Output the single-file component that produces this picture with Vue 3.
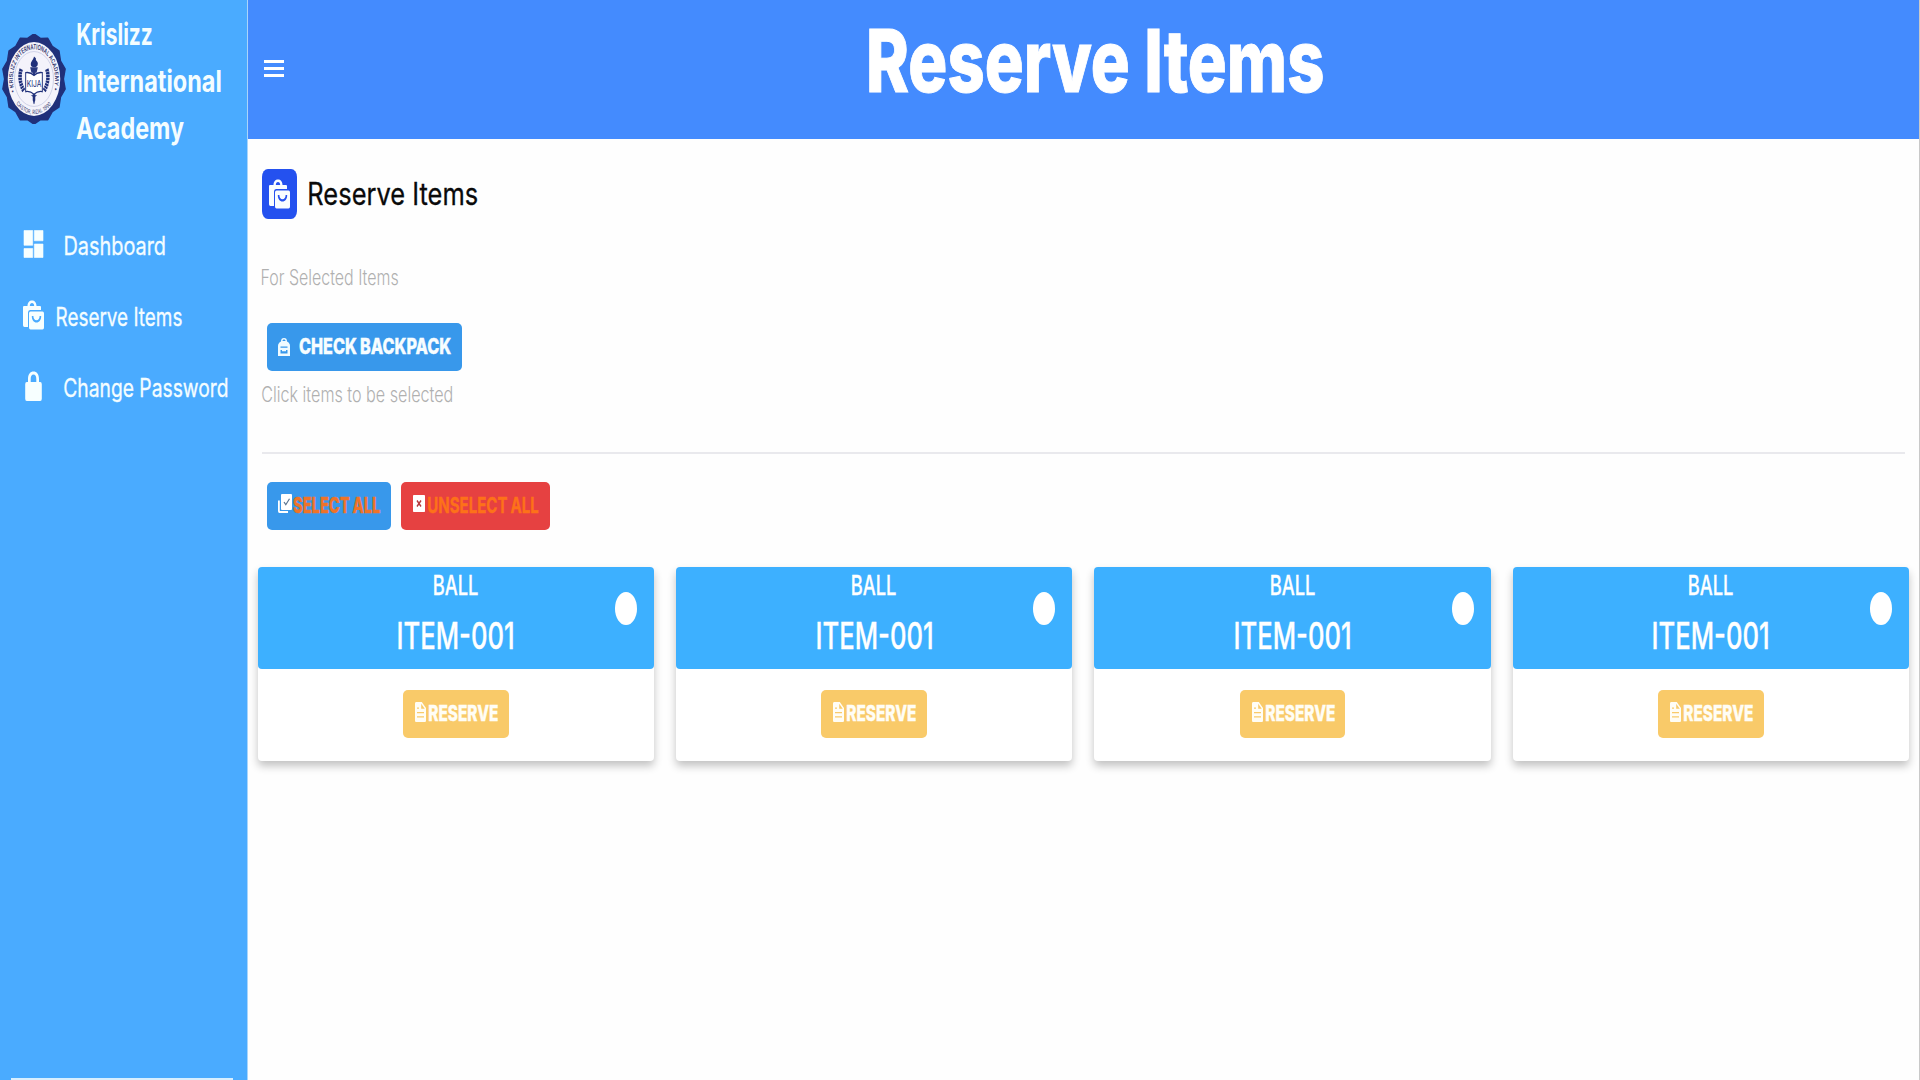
<script setup>
const nav = [
  { icon: 'dashboard', label: 'Dashboard', width: 100, gap: 21 },
  { icon: 'bags', label: 'Reserve Items', width: 124.5, gap: 13 },
  { icon: 'lock', label: 'Change Password', width: 163.5, gap: 20 },
]

const items = [1, 2, 3, 4].map((id) => ({ id, name: 'BALL', code: 'ITEM-001' }))

const scallops = 14
const sealPoints = Array.from({ length: scallops * 2 }, (_, i) => {
  const angle = (Math.PI * i) / scallops - Math.PI / 2
  const r = i % 2 ? 46 : 50
  return `${50 + r * Math.cos(angle)},${50 + r * Math.sin(angle)}`
}).join(' ')

// Condenses a label horizontally so that its ink fills the given width.
const vFit = {
  mounted(el, { value }) {
    const css = getComputedStyle(el)
    const ctx = document.createElement('canvas').getContext('2d')
    ctx.font = `${css.fontWeight} ${css.fontSize} ${css.fontFamily}`
    ctx.wordSpacing = css.wordSpacing
    const m = ctx.measureText(el.textContent.trim())
    const scale = value / (m.actualBoundingBoxLeft + m.actualBoundingBoxRight)
    el.style.marginRight = `${value - el.getBoundingClientRect().width}px`
    el.style.transform = `translateX(${m.actualBoundingBoxLeft * scale}px) scaleX(${scale})`
  },
}
</script>

<template>
  <div class="page">
    <aside class="sidebar">
      <div class="brand">
        <svg class="seal" viewBox="0 0 100 100" preserveAspectRatio="none">
          <defs>
            <path id="arc-top" d="M20.1 64A33 33 0 1 1 79.9 64" />
            <path id="arc-bottom" d="M18.5 73A39 39 0 0 0 81.5 73" />
          </defs>
          <polygon :points="sealPoints" fill="#20307a" stroke="#20307a" stroke-width="2" stroke-linejoin="round" />
          <circle cx="50" cy="50" r="41" fill="#f4f3fb" />
          <circle cx="50" cy="50" r="30.5" fill="none" stroke="#b9bddb" stroke-width=".8" />
          <text class="seal-text"><textPath href="#arc-top" textLength="130" lengthAdjust="spacingAndGlyphs">• KRISLIZZ INTERNATIONAL ACADEMY •</textPath></text>
          <text class="seal-text small"><textPath href="#arc-bottom" startOffset="6" textLength="60" lengthAdjust="spacingAndGlyphs">CASTOR, RIZAL 1990</textPath></text>
          <path d="M50 25c-1 4-5 5-5 9 0 2 2 3 5 3s6-1 6-4c0-3-4-3-3-6z" fill="#20307a" />
          <path d="M44 37h12l-2 6h-8zM48 41h4v33l-2 2-2-2z" fill="#2a397f" />
          <path d="M37 43q7-1 13 3 6-4 13-3v21q-7-1-13 3-6-4-13-3z" fill="#fff" stroke="#20307a" stroke-width="1.5" />
          <g fill="none" stroke="#20307a" stroke-width="5.500" stroke-dasharray="2.6 .7">
            <path d="M30 39q-5 12 4 24" /><path d="M70 39q5 12-4 24" />
          </g>
          <text x="50" y="58.500" text-anchor="middle" class="seal-mono">KIJA</text>
          <path d="M45 68h10l-4 2v7l-1 1-1-1v-7z" fill="#20307a" />
        </svg>
        <div class="brand-name">
          <div><span v-fit="75" class="fit">Krislizz</span></div>
          <div><span v-fit="144" class="fit">International</span></div>
          <div class="academy"><span v-fit="108" class="fit">Academy</span></div>
        </div>
      </div>
      <nav class="nav">
        <a v-for="n in nav" :key="n.label" class="nav-item" :style="{ gap: n.gap + 'px' }">
          <svg v-if="n.icon === 'dashboard'" class="nav-icon" viewBox="0 0 21 30" preserveAspectRatio="none">
            <path d="M1 1.500h8.700v14.800H1zM11.300 1.500H20v10.300h-8.700zM1 19.500h8.700v9H1zM11.300 15h8.700v13.500h-8.700z" stroke="#f7ffff" stroke-width=".6" stroke-linejoin="round" />
          </svg>
          <svg v-else-if="n.icon === 'bags'" class="nav-icon" viewBox="0 0 21 30" preserveAspectRatio="none">
            <path fill-rule="evenodd" d="M4.500 6C4.500 2.500 6.500.5 9 .5S13.500 2.500 13.500 6H17q1 0 1 1.200V10H7q-2 0-2 2.500V27H1.500Q0 27 0 25.200V7.200Q0 6 1 6zM6.800 6h4.400c0-2-1-3-2.200-3S6.800 4 6.800 6z" />
            <path fill-rule="evenodd" d="M7.500 11.500h12q1.500 0 1.500 2v14q0 2-1.500 2h-12q-1.500 0-1.500-2v-14q0-2 1.500-2zM8.800 16c0 4 2 6.500 4.700 6.500S18.200 20 18.200 16h-1.600c0 2.700-1.200 4.200-3.100 4.200S10.400 18.700 10.400 16z" />
          </svg>
          <svg v-else class="nav-icon" viewBox="0 0 21 30" preserveAspectRatio="none">
            <path fill-rule="evenodd" d="M5 11V8C5 3 7.300.5 10.500.5S16 3 16 8v3h1.200q1.600 0 1.600 2.200v14.600q0 2.200-1.600 2.200H3.800q-1.600 0-1.600-2.200V13.200Q2.200 11 3.800 11zM7.700 11h5.600V8c0-3-1-4.500-2.800-4.500S7.700 5 7.700 8z" />
          </svg>
          <span v-fit="n.width" class="fit">{{ n.label }}</span>
        </a>
      </nav>
      <div class="sidebar-foot"></div>
    </aside>

    <main class="main">
      <header class="topbar">
        <div class="burger"><i></i><i></i><i></i></div>
        <h1><span v-fit="454" class="fit">Reserve Items</span></h1>
      </header>

      <section class="intro">
        <div class="heading">
          <div class="heading-badge">
            <svg viewBox="0 0 21 30" preserveAspectRatio="none">
              <path fill-rule="evenodd" d="M4.500 6C4.500 2.500 6.500.5 9 .5S13.500 2.500 13.500 6H17q1 0 1 1.200V10H7q-2 0-2 2.500V27H1.500Q0 27 0 25.200V7.200Q0 6 1 6zM6.800 6h4.400c0-2-1-3-2.200-3S6.800 4 6.800 6z" />
              <path fill-rule="evenodd" d="M7.500 11.500h12q1.500 0 1.500 2v14q0 2-1.500 2h-12q-1.500 0-1.500-2v-14q0-2 1.500-2zM8.800 16c0 4 2 6.500 4.700 6.500S18.200 20 18.200 16h-1.600c0 2.700-1.200 4.200-3.100 4.200S10.400 18.700 10.400 16z" />
            </svg>
          </div>
          <h2><span v-fit="168" class="fit">Reserve Items</span></h2>
        </div>
        <p class="hint first"><span v-fit="136" class="fit">For Selected Items</span></p>
        <button class="btn check">
          <svg class="pack-icon" viewBox="0 0 12 18" preserveAspectRatio="none">
            <path fill-rule="evenodd" d="M3 3.500C3 1 4 0 6 0s3 1 3 3.500C11 4.500 12 6 12 8v10H0V8c0-2 1-3.500 3-4.500zM4.500 3h3C7.500 2 7 1.500 6 1.500S4.500 2 4.500 3zM2.500 8.500v1.300h7V8.500zM2.500 12v3.500h7V12H8v1.300H4V12z" />
          </svg>
          <span v-fit="152" class="fit">CHECK BACKPACK</span>
        </button>
        <p class="hint second"><span v-fit="190" class="fit">Click items to be selected</span></p>
      </section>

      <div class="actions">
        <button class="btn select">
          <svg class="select-icon" viewBox="0 0 14 19" preserveAspectRatio="none">
            <path d="M0 6.500h1.800V17H10v2H1.500Q0 19 0 17z" fill="#fff" />
            <rect x="3" width="11" height="16" rx="1" fill="#fff" />
            <path d="M6 8l1.800 2.700 3.700-6" fill="none" stroke="#5a7490" stroke-width="1.200" />
          </svg>
          <span v-fit="87" class="fit">SELECT ALL</span>
        </button>
        <button class="btn unselect">
          <svg class="unselect-icon" viewBox="0 0 12 17" preserveAspectRatio="none">
            <rect width="12" height="17" rx=".8" fill="#fff" />
            <path d="M4 5.500l4 6M8 5.500l-4 6" fill="none" stroke="#b5383c" stroke-width="1.400" />
          </svg>
          <span v-fit="110.5" class="fit">UNSELECT ALL</span>
        </button>
      </div>

      <div class="cards">
        <article v-for="item in items" :key="item.id" class="card">
          <div class="card-head">
            <div class="name"><span v-fit="44" class="fit">{{ item.name }}</span></div>
            <div class="code"><span v-fit="115" class="fit">{{ item.code }}</span></div>
            <i class="radio"></i>
          </div>
          <div class="card-body">
            <button class="btn reserve">
              <svg class="file-icon" viewBox="0 0 11 20" preserveAspectRatio="none">
                <path fill-rule="evenodd" d="M1 0h5.800L11 6v12.500Q11 20 10 20H1q-1 0-1-1.500v-17Q0 0 1 0zM6.200 1.800v5h3.500zM2 5.500v1.200h2V5.500zM2 10v1.300h7V10zM2 14.300v1.300h7v-1.300z" />
              </svg>
              <span v-fit="69" class="fit">RESERVE</span>
            </button>
          </div>
        </article>
      </div>
    </main>
  </div>
</template>

<style>
body {
  margin: 0;
  overflow: hidden;
}
</style>

<style scoped>
* {
  box-sizing: border-box;
}
.page {
  display: flex;
  width: 1920px;
  height: 1080px;
  background: #fefefe;
  font-family: Inter, "Liberation Sans", sans-serif;
  border-right: 1px solid #c9c9c9;
}
h1,
h2,
p {
  margin: 0;
  font-weight: 400;
}
.fit {
  display: inline-block;
  flex: none;
  white-space: nowrap;
  transform-origin: 0 50%;
}
.sidebar {
  display: flex;
  flex: none;
  flex-direction: column;
  width: 248px;
  background: #4aabff;
  border-right: 1px solid #a9d5fb;
  color: #f4fdff;
}
.brand {
  display: flex;
  height: 216px;
  padding-top: 11px;
}
.seal {
  flex: none;
  width: 64px;
  height: 90px;
  margin: 23px 11px 0 2px;
}
.seal-text {
  font-size: 8px;
  font-weight: 600;
  fill: #34386f;
}
.seal-text.small {
  font-size: 6.500px;
  font-weight: 400;
}
.seal-mono {
  font-size: 10.500px;
  fill: #20307a;
}
.brand-name {
  font-size: 30px;
  font-weight: 700;
  line-height: 47px;
}
.academy {
  margin-left: -1px;
}
.nav {
  display: flex;
  flex-direction: column;
  flex: 1;
}
.nav-item {
  display: flex;
  align-items: center;
  height: 71px;
  padding-left: 23px;
  padding-bottom: 12px;
  font-size: 25px;
  -webkit-text-stroke: 0.3px currentColor;
}
.nav-icon {
  flex: none;
  width: 21px;
  height: 30px;
  margin-top: -4px;
  fill: #f7ffff;
}
.sidebar-foot {
  height: 2px;
  margin: 0 14px 0 11px;
  background: #d8efff;
}
.main {
  display: flex;
  flex: 1;
  flex-direction: column;
}
.topbar {
  display: flex;
  align-items: flex-start;
  height: 139px;
  background: #448bfe;
}
.burger {
  display: flex;
  flex: none;
  flex-direction: column;
  gap: 4px;
  width: 20px;
  margin: 60px 585px 0 16px;
}
.burger i {
  height: 3px;
  background: #fff;
}
h1 {
  color: #fff;
  font-size: 87px;
  font-weight: 800;
  line-height: 122px;
}
h1 .fit {
  word-spacing: 0;
  -webkit-text-stroke: 1px currentColor;
}
.intro {
  display: flex;
  flex-direction: column;
  align-items: flex-start;
  height: 315px;
  margin: 0 14px 0 14px;
  padding-top: 30px;
  border-bottom: 2px solid #e9e9ed;
}
.heading {
  display: flex;
  align-items: center;
  gap: 12px;
}
.heading-badge {
  display: flex;
  align-items: center;
  justify-content: center;
  width: 35px;
  height: 50px;
  border-radius: 6px / 8px;
  background: #2451ef;
}
.heading-badge svg {
  width: 21px;
  height: 30px;
  fill: #f8fdff;
}
h2 {
  height: 50px;
  color: #0a0a0a;
  font-size: 31px;
  line-height: 49px;
  -webkit-text-stroke: 0.3px currentColor;
}
.hint {
  color: #b0b0b0;
  font-size: 21px;
  font-weight: 300;
  line-height: 30px;
}
.hint.first {
  margin-top: 44px;
}
.hint.second {
  margin-top: 9px;
}
.btn {
  display: flex;
  align-items: center;
  height: 48px;
  margin: 0;
  padding: 0;
  border: 0;
  border-radius: 5px;
  color: #f7fdff;
  font: 800 22px/28px Inter, "Liberation Sans", sans-serif;
}
.btn .fit {
  margin-top: -2px;
  word-spacing: -0.03em;
  -webkit-text-stroke: 0.4px currentColor;
}
.check {
  width: 195px;
  margin: 30px 0 0 5px;
  padding-left: 11px;
  gap: 10px;
  background: #3898eb;
}
.pack-icon {
  flex: none;
  width: 12px;
  height: 18px;
  margin-top: -1px;
  margin-right: -1px;
  fill: #f0fbff;
}
.actions {
  display: flex;
  gap: 10px;
  margin: 28px 0 0 19px;
}
.select {
  width: 124px;
  padding-left: 11px;
  gap: 1px;
  background: #3898eb;
  color: #ee7328;
}
.select-icon {
  flex: none;
  width: 14px;
  height: 19px;
  margin-top: -6px;
}
.unselect {
  width: 149px;
  padding-left: 12px;
  gap: 3px;
  background: #e64141;
  color: #fd7119;
  font-weight: 700;
}
.unselect-icon {
  flex: none;
  width: 12px;
  height: 17px;
  margin-top: -5px;
}
.cards {
  display: grid;
  grid-template-columns: repeat(4, 396.500px);
  column-gap: 21.900px;
  margin: 37px 0 0 9.500px;
}
.card {
  height: 193.500px;
  border-radius: 4px;
  background: #fff;
  box-shadow: 0 5px 8px rgba(0, 0, 0, 0.24);
}
.card-head {
  position: relative;
  height: 101.500px;
  border-radius: 4px;
  background: #3db0ff;
  color: #fff;
}
.name {
  display: flex;
  justify-content: center;
  height: 37px;
  font-size: 27.500px;
  font-weight: 500;
  line-height: 37px;
  -webkit-text-stroke: 0.3px currentColor;
}
.code {
  display: flex;
  justify-content: center;
  font-size: 37px;
  font-weight: 500;
  line-height: 64px;
  -webkit-text-stroke: 0.3px currentColor;
}
.radio {
  position: absolute;
  top: 25px;
  right: 17px;
  width: 22px;
  height: 33px;
  border-radius: 50%;
  background: #fff;
}
.card-body {
  display: flex;
  justify-content: center;
  padding-top: 21.500px;
}
.reserve {
  width: 105.500px;
  padding-left: 12px;
  gap: 3px;
  background: #f9ca69;
  color: #fffdf5;
}
.file-icon {
  flex: none;
  width: 11px;
  height: 20px;
  margin-top: -4px;
  fill: #fffdf5;
}
</style>
